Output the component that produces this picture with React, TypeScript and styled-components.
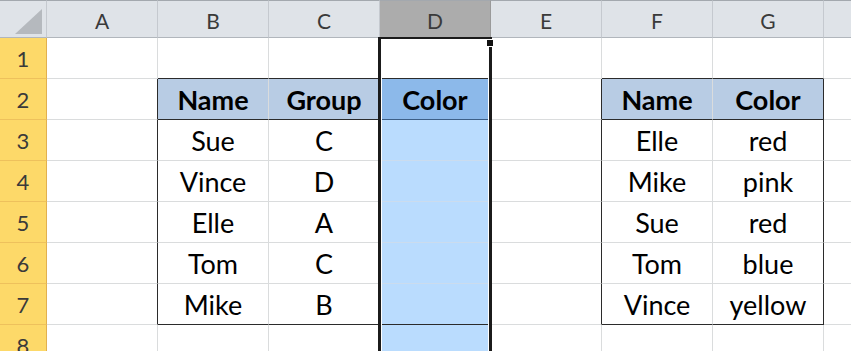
import styled, { createGlobalStyle } from 'styled-components'

const GlobalStyle = createGlobalStyle`
  html, body {
    margin: 0;
    padding: 0;
    background: #ffffff;
    overflow: hidden;
  }
  body {
    font-family: Lato, 'Liberation Sans', sans-serif;
  }
`

// the last column only peeks in at the right edge, its letter stays out of view
const COLS = ['A', 'B', 'C', 'D', 'E', 'F', 'G', '']
const ROWS = [1, 2, 3, 4, 5, 6, 7, 8]

const GRID = '#dadcdd'
const DARK = '#2b2b2b'

type CellData = { text: string; bold?: boolean }

const values: Record<string, CellData> = {
	B2: { text: 'Name', bold: true },
	C2: { text: 'Group', bold: true },
	D2: { text: 'Color', bold: true },
	B3: { text: 'Sue' },
	C3: { text: 'C' },
	B4: { text: 'Vince' },
	C4: { text: 'D' },
	B5: { text: 'Elle' },
	C5: { text: 'A' },
	B6: { text: 'Tom' },
	C6: { text: 'C' },
	B7: { text: 'Mike' },
	C7: { text: 'B' },
	F2: { text: 'Name', bold: true },
	G2: { text: 'Color', bold: true },
	F3: { text: 'Elle' },
	G3: { text: 'red' },
	F4: { text: 'Mike' },
	G4: { text: 'pink' },
	F5: { text: 'Sue' },
	G5: { text: 'red' },
	F6: { text: 'Tom' },
	G6: { text: 'blue' },
	F7: { text: 'Vince' },
	G7: { text: 'yellow' },
}

// two bordered ranges: B2:D7 and F2:G7
const tables = [
	{ from: 1, to: 3, top: 2, bottom: 7 },
	{ from: 5, to: 6, top: 2, bottom: 7 },
]

const inTable = (c: number, r: number) =>
	tables.some((t) => c >= t.from && c <= t.to && r >= t.top && r <= t.bottom)

const cellStyle = (c: number, r: number) => {
	const isHeaderRow = r === 2 && inTable(c, r)
	const selected = c === 3
	let fill = '#ffffff'
	if (selected && r === 2) fill = '#8cb9ea'
	else if (selected && r > 1) fill = '#badcfe'
	else if (isHeaderRow) fill = '#b8cce4'

	let right = selected && r > 1 ? '#cfe0f2' : GRID
	if (inTable(c, r) !== inTable(c + 1, r)) right = DARK

	let bottom = selected && r > 1 ? '#cbdcee' : GRID
	if (inTable(c, r) !== inTable(c, r + 1)) bottom = DARK
	if (r === 2 && inTable(c, r)) bottom = selected ? '#3d5f86' : DARK

	return { fill, right, bottom }
}

export default function App() {
	return (
		<>
			<GlobalStyle />
			<Sheet>
				<Corner />
				{COLS.map((col, i) => (
					<ColHeader key={i} $selected={col === 'D'}>
						{col}
					</ColHeader>
				))}
				{ROWS.map((r) => (
					<Row key={r} r={r} />
				))}
				<Selection>
					<FillHandle />
				</Selection>
			</Sheet>
		</>
	)
}

const Row = ({ r }: { r: number }) => (
	<>
		<RowHeader>{r}</RowHeader>
		{COLS.map((col, c) => {
			const v = col ? values[col + r] : undefined
			const s = cellStyle(c, r)
			return (
				<Cell key={c} $fill={s.fill} $right={s.right} $bottom={s.bottom} $bold={v?.bold}>
					{v?.text}
				</Cell>
			)
		})}
	</>
)

const Sheet = styled.div`
	position: relative;
	display: grid;
	grid-template-columns: 47px repeat(8, 111px);
	grid-template-rows: 38px repeat(8, 41px);
	width: 851px;
	height: 351px;
	overflow: hidden;
`

const Corner = styled.div`
	position: relative;
	box-sizing: border-box;
	background: #dfe3e8;
	border-top: 1px solid #a3a8ae;
	border-right: 1px solid #c5c9cf;
	border-bottom: 1px solid #b1b6bc;
	&::after {
		content: '';
		position: absolute;
		left: 15px;
		top: 8px;
		width: 27px;
		height: 25px;
		background: #b5b9be;
		clip-path: polygon(100% 0, 100% 100%, 0 100%);
	}
`

const ColHeader = styled.div<{ $selected?: boolean }>`
	box-sizing: border-box;
	display: flex;
	align-items: center;
	justify-content: center;
	padding-top: 3px;
	background: ${(p) => (p.$selected ? '#acacac' : '#dfe3e8')};
	border-top: 1px solid #a3a8ae;
	border-right: 1px solid ${(p) => (p.$selected ? '#9a9a9a' : '#c5c9cf')};
	border-bottom: 1px solid ${(p) => (p.$selected ? '#8e8e8e' : '#b1b6bc')};
	color: #3a3a3a;
	font-size: 21px;
`

const RowHeader = styled.div`
	box-sizing: border-box;
	display: flex;
	align-items: center;
	justify-content: center;
	background: #fdd969;
	border-right: 1px solid #e2b04e;
	border-bottom: 1px solid #eec15c;
	color: #3a3a3a;
	font-size: 22px;
`

const Cell = styled.div<{ $fill: string; $right: string; $bottom: string; $bold?: boolean }>`
	box-sizing: border-box;
	display: flex;
	align-items: center;
	justify-content: center;
	background: ${(p) => p.$fill};
	border-right: 1px solid ${(p) => p.$right};
	border-bottom: 1px solid ${(p) => p.$bottom};
	color: #000000;
	font-size: 27px;
	font-weight: ${(p) => (p.$bold ? 700 : 400)};
	white-space: nowrap;
`

// thick outline of the selected column D
const Selection = styled.div`
	position: absolute;
	left: 378px;
	top: 37px;
	bottom: 0;
	width: 114px;
	box-sizing: border-box;
	border-left: 3px solid #1b1b1b;
	border-right: 3px solid #1b1b1b;
	border-top: 2px solid #1b1b1b;
	box-shadow: inset 1px 0 0 #ffffff, inset -1px 0 0 #ffffff;
	pointer-events: none;
`

const FillHandle = styled.div`
	position: absolute;
	right: -5px;
	top: 0;
	width: 6px;
	height: 6px;
	background: #111111;
	border: 1px solid #ffffff;
`
